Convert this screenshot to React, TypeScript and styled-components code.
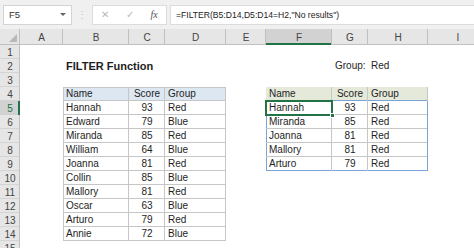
import React from "react";
import styled, { createGlobalStyle, css } from "styled-components";

const GlobalStyle = createGlobalStyle`
  html, body {
    margin: 0;
    padding: 0;
    background: #ffffff;
    overflow: hidden;
  }
  body {
    font-family: "Liberation Sans", Arial, sans-serif;
  }
`;

const GRID = "#c6c6c6";
const SPILL = "#7ba3d6";
const GREEN = "#217346";

type Edges = { t?: string; r?: string; b?: string; l?: string };

const edgeShadow = (e?: Edges) => {
  if (!e) return "none";
  const parts: string[] = [];
  if (e.t) parts.push(`inset 0 1px 0 ${e.t}`);
  if (e.r) parts.push(`inset -1px 0 0 ${e.r}`);
  if (e.b) parts.push(`inset 0 -1px 0 ${e.b}`);
  if (e.l) parts.push(`inset 1px 0 0 ${e.l}`);
  return parts.length ? parts.join(", ") : "none";
};

interface CellData {
  text?: string;
  bold?: boolean;
  align?: "left" | "center" | "right";
  bg?: string;
  edges?: Edges;
  selected?: boolean;
}

const Screen = styled.div`
  width: 474px;
  height: 248px;
  overflow: hidden;
  background: #fff;
  color: #222;
`;

const FormulaBar = styled.div`
  height: 29px;
  background: #f0f0f0;
  display: flex;
  align-items: center;
  padding-left: 3px;
  box-sizing: border-box;
`;

const NameBox = styled.div`
  width: 69px;
  height: 20px;
  background: #fff;
  border: 1px solid #d4d4d4;
  box-sizing: border-box;
  display: flex;
  align-items: center;
  justify-content: space-between;
  padding: 0 5px 0 5px;
  font-size: 9.5px;
  color: #333;
`;

const Caret = styled.span`
  width: 0;
  height: 0;
  border-left: 3px solid transparent;
  border-right: 3px solid transparent;
  border-top: 3px solid #666;
`;

const Dots = styled.span`
  width: 20px;
  text-align: center;
  color: #c4c4c4;
  font-size: 10px;
`;

const ActionBox = styled.div`
  width: 75px;
  height: 20px;
  background: #fff;
  border: 1px solid #dcdcdc;
  box-sizing: border-box;
  display: flex;
  align-items: center;
  justify-content: space-around;
  color: #b8b8b8;
  font-size: 10px;
`;

const Fx = styled.span`
  font-family: "Liberation Serif", serif;
  font-style: italic;
  color: #555;
  font-size: 10px;
`;

const FormulaInput = styled.div`
  flex: 1;
  height: 20px;
  margin-left: 3px;
  background: #fff;
  border: 1px solid #dcdcdc;
  border-right: none;
  box-sizing: border-box;
  display: flex;
  align-items: center;
  padding-left: 5px;
  font-size: 8.6px;
  color: #222;
  white-space: nowrap;
`;

const Sheet = styled.div`
  display: grid;
  grid-template-columns: 20px 43px 66px 36px 61px 40px 66px 36px 60px 60px;
  grid-template-rows: 16px;
  grid-auto-rows: 14px;
`;

const Corner = styled.div`
  background: #e6e6e6;
  box-shadow: inset -1px -1px 0 #c0c0c0;
  position: relative;
  &::after {
    content: "";
    position: absolute;
    right: 3px;
    bottom: 3px;
    border-left: 8px solid transparent;
    border-bottom: 8px solid #b8b8b8;
  }
`;

const ColHead = styled.div<{ $active?: boolean }>`
  background: ${(p) => (p.$active ? "#d2d2d2" : "#e6e6e6")};
  box-shadow: ${(p) =>
    p.$active
      ? `inset -1px 0 0 #c0c0c0, inset 0 -2px 0 ${GREEN}`
      : "inset -1px -1px 0 #c0c0c0"};
  display: flex;
  align-items: center;
  justify-content: center;
  font-size: 10px;
  color: #444;
`;

const RowHead = styled.div<{ $active?: boolean }>`
  background: ${(p) => (p.$active ? "#d2d2d2" : "#e6e6e6")};
  box-shadow: ${(p) =>
    p.$active
      ? `inset -2px 0 0 ${GREEN}, inset 0 -1px 0 #d0d0d0`
      : "inset -1px 0 0 #c0c0c0, inset 0 -1px 0 #d4d4d4"};
  display: flex;
  align-items: center;
  justify-content: center;
  font-size: 10px;
  color: ${(p) => (p.$active ? GREEN : "#444")};
`;

const Cell = styled.div<{
  $align: string;
  $bg?: string;
  $bold?: boolean;
  $edges?: Edges;
  $selected?: boolean;
}>`
  position: relative;
  background: ${(p) => p.$bg || "transparent"};
  box-shadow: ${(p) => edgeShadow(p.$edges)};
  font-size: ${(p) => (p.$bold ? "11px" : "10px")};
  font-weight: ${(p) => (p.$bold ? 700 : 400)};
  color: #1e1e1e;
  line-height: 14px;
  white-space: nowrap;
  text-align: ${(p) => p.$align};
  padding: 0 3px;
  box-sizing: border-box;
  ${(p) =>
    p.$selected &&
    css`
      &::before {
        content: "";
        position: absolute;
        inset: -1px -1px -1px -1px;
        border: 2px solid ${GREEN};
        box-sizing: border-box;
        z-index: 2;
      }
      &::after {
        content: "";
        position: absolute;
        right: -3px;
        bottom: -3px;
        width: 5px;
        height: 5px;
        background: ${GREEN};
        border: 1px solid #fff;
        box-sizing: border-box;
        z-index: 3;
      }
    `}
`;

const columns = ["A", "B", "C", "D", "E", "F", "G", "H", "I"];

const source = [
  ["Hannah", "93", "Red"],
  ["Edward", "79", "Blue"],
  ["Miranda", "85", "Red"],
  ["William", "64", "Blue"],
  ["Joanna", "81", "Red"],
  ["Collin", "85", "Blue"],
  ["Mallory", "81", "Red"],
  ["Oscar", "63", "Blue"],
  ["Arturo", "79", "Red"],
  ["Annie", "72", "Blue"],
];

const result = source.filter((r) => r[2] === "Red");

const buildRow = (row: number): CellData[] => {
  const cells: CellData[] = columns.map(() => ({ align: "left" }));
  if (row === 2) {
    cells[1] = { text: "FILTER Function", bold: true, align: "left" };
    cells[6] = { text: "Group:", align: "right" };
    cells[7] = { text: "Red", align: "left" };
  }
  // source table B4:D14
  if (row >= 4 && row <= 14) {
    const header = row === 4;
    const vals = header ? ["Name", "Score", "Group"] : source[row - 5];
    [1, 2, 3].forEach((c, i) => {
      cells[c] = {
        text: vals[i],
        align: i === 1 ? "center" : "left",
        bg: header ? "#dde7f1" : "#fff",
        edges: {
          t: header ? GRID : undefined,
          r: GRID,
          b: GRID,
          l: i === 0 ? GRID : undefined,
        },
      };
    });
  }
  // spill table F4:H9
  if (row >= 4 && row <= 9) {
    const header = row === 4;
    const vals = header ? ["Name", "Score", "Group"] : result[row - 5];
    [5, 6, 7].forEach((c, i) => {
      const last = row === 9;
      cells[c] = {
        text: vals[i],
        align: i === 1 ? "center" : "left",
        bg: header ? "#e4e9d9" : "#fff",
        edges: header
          ? { r: GRID, b: SPILL }
          : {
              r: i === 2 ? SPILL : GRID,
              b: last ? SPILL : GRID,
              l: i === 0 ? SPILL : undefined,
            },
        selected: row === 5 && i === 0,
      };
    });
  }
  return cells;
};

const rows = Array.from({ length: 15 }, (_, i) => i + 1);

const App: React.FC = () => (
  <>
    <GlobalStyle />
    <Screen>
      <FormulaBar>
        <NameBox>
          <span>F5</span>
          <Caret />
        </NameBox>
        <Dots>⋮</Dots>
        <ActionBox>
          <span>✕</span>
          <span>✓</span>
          <Fx>fx</Fx>
        </ActionBox>
        <FormulaInput>=FILTER(B5:D14,D5:D14=H2,"No results")</FormulaInput>
      </FormulaBar>
      <Sheet>
        <Corner />
        {columns.map((c) => (
          <ColHead key={c} $active={c === "F"}>
            {c}
          </ColHead>
        ))}
        {rows.map((r) => (
          <React.Fragment key={r}>
            <RowHead $active={r === 5}>{r}</RowHead>
            {buildRow(r).map((cell, i) => (
              <Cell
                key={i}
                $align={cell.align || "left"}
                $bg={cell.bg}
                $bold={cell.bold}
                $edges={cell.edges}
                $selected={cell.selected}
              >
                {cell.text}
              </Cell>
            ))}
          </React.Fragment>
        ))}
      </Sheet>
    </Screen>
  </>
);

export default App;
